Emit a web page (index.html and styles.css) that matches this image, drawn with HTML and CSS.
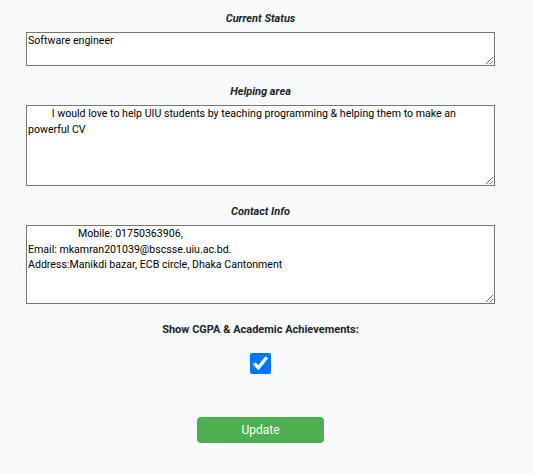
FILE: index.html
```html
<!DOCTYPE html>
<html>
<head>
<meta charset="utf-8">
<link rel="stylesheet" href="styles.css">
</head>
<body>
<form class="form">
  <div class="field">
    <label class="label">Current Status</label>
    <textarea class="box box-sm">Software engineer</textarea>
  </div>
  <div class="field">
    <label class="label">Helping area</label>
    <textarea class="box box-lg">         I would love to help UIU students by teaching programming &amp; helping them to make an powerful CV</textarea>
  </div>
  <div class="field">
    <label class="label">Contact Info</label>
    <textarea class="box box-md">                   Mobile: 01750363906,
Email: mkamran201039@bscsse.uiu.ac.bd.
Address:Manikdi bazar, ECB circle, Dhaka Cantonment</textarea>
  </div>
  <div class="check-row">
    <label class="check-label">Show CGPA &amp; Academic Achievements:</label>
    <input class="check" type="checkbox" checked>
  </div>
  <button class="btn" type="button">Update</button>
</form>
</body>
</html>
```
FILE: styles.css
```css
html, body {
  margin: 0;
  padding: 0;
  background: #f8f9fa;
}
body {
  font-family: Roboto, "Noto Sans", sans-serif;
  color: #212529;
}
.form {
  width: 469px;
  margin-left: 26px;
  padding-top: 10.75px;
  display: flex;
  flex-direction: column;
  align-items: center;
}
.field {
  width: 100%;
  display: flex;
  flex-direction: column;
  align-items: center;
  margin-bottom: 18px;
}
.label {
  font-size: 11px;
  font-weight: bold;
  font-style: italic;
  line-height: 16px;
  margin-bottom: 5px;
}
.box {
  box-sizing: border-box;
  width: 469px;
  border: 1px solid #767676;
  background: #fff;
  font-family: Roboto, "Noto Sans", sans-serif;
  font-size: 10.6px;
  line-height: 15.8px;
  padding: 0 1px;
  color: #000;
  resize: vertical;
  margin: 0;
  display: block;
}
.box-sm { height: 34px; }
.box-lg { height: 81px; }
.box-md { height: 79px; }
.field:last-of-type { margin-bottom: 14.5px; }
.check-row {
  display: flex;
  flex-direction: column;
  align-items: center;
}
.check-label {
  font-size: 11px;
  font-weight: bold;
  line-height: 16px;
}
.check {
  width: 21px;
  height: 21px;
  margin: 15.5px 0 0 0;
  accent-color: #0075ff;
}
.btn {
  margin-top: 43px;
  width: 127px;
  height: 26px;
  border: none;
  border-radius: 4px;
  background: #4caf50;
  color: #fff;
  font-family: Roboto, "Noto Sans", sans-serif;
  font-size: 12px;
  padding: 0;
}
```
